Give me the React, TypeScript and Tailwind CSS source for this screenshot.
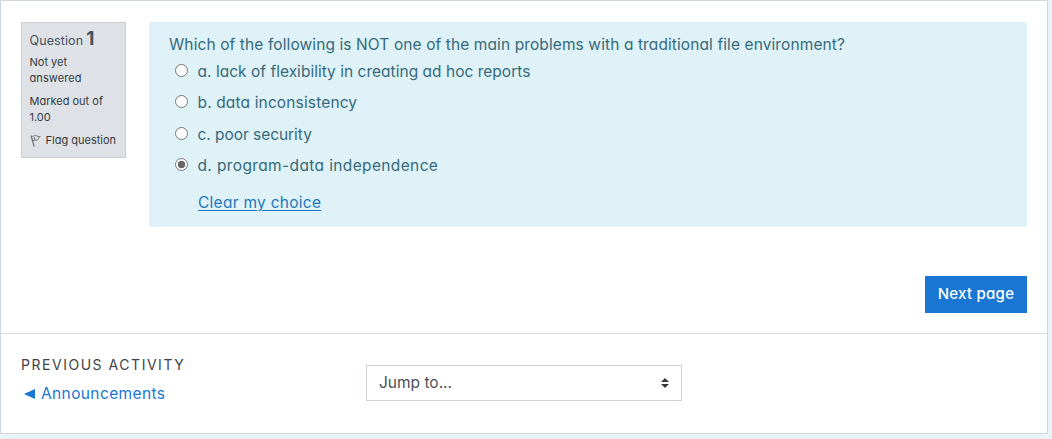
import { useState } from "react";

const choices = [
  { id: "a", label: "a. lack of flexibility in creating ad hoc reports", spacing: "tracking-[0.02px]" },
  { id: "b", label: "b. data inconsistency", spacing: "tracking-[0.14px]" },
  { id: "c", label: "c. poor security", spacing: "tracking-[-0.05px]" },
  { id: "d", label: "d. program-data independence", spacing: "tracking-[0.37px]" },
];

function FlagIcon() {
  return (
    <svg width="11" height="13" viewBox="0 0 11 13" fill="none" stroke="#73787d" strokeWidth="1">
      <path d="M1 1.5 4.2 12.5" strokeWidth="1.3" />
      <path d="M1.2 2.4C3 3.2 3.8 1 5.8 1.6S8.4 3 10.2 2.5C8.2 4 8.6 5.6 7.2 6S4.6 5.4 2.8 7" />
      <path d="M4 3.2 5 6.2" />
    </svg>
  );
}

function QuestionInfo() {
  return (
    <aside className="h-[136px] w-[105px] shrink-0 border border-[#cbced3] bg-[#dee2e6] pl-[7.5px] text-[11px] leading-4 text-[#343a40]">
      <h3 className="mt-[4px] flex h-6 items-baseline gap-[3px] text-[12.5px] leading-6 text-[#45525f]">
        <span className="tracking-[0.1px]">Question</span>
        <span className="text-[19px] leading-6 font-bold">1</span>
      </h3>
      <p className="mt-[3px] whitespace-nowrap">Not yet<br /><span className="tracking-[0.1px]">answered</span></p>
      <p className="mt-[7px] whitespace-nowrap">Marked out of<br />1.00</p>
      <div className="mt-[7px] flex items-center gap-[5px] whitespace-nowrap">
        <FlagIcon />
        <span>Flag question</span>
      </div>
    </aside>
  );
}

function Question() {
  const [selected, setSelected] = useState("d");
  return (
    <section className="h-[205px] w-[878px] rounded-[2px] bg-[#def2f8] pl-5 text-[15.5px] text-[#37697a]">
      <p className="pt-[11px] leading-6 tracking-[0.1px] whitespace-nowrap"><span>Which of the following is NOT one of the main problems with a traditional file environment?</span></p>
      <div className="mt-[3px] pl-[6px]">
        {choices.map((c) => (
          <label key={c.id} className="flex h-[31.3px] items-start whitespace-nowrap">
            <input type="radio" name="answer" checked={selected === c.id} onChange={() => setSelected(c.id)} className="mt-[4px] h-[13px] w-[13px] appearance-none rounded-full border border-[#767676] bg-white checked:bg-[radial-gradient(circle,#666_0_3.4px,#fff_4.1px)]" />
            <span className={"ml-[9.5px] leading-6 " + c.spacing}>{c.label}</span>
          </label>
        ))}
      </div>
      <a href="#" className="ml-[29px] mt-[6px] inline-block leading-6 tracking-[0.27px] text-[#1f76bd] underline underline-offset-2">Clear my choice</a>
    </section>
  );
}

export default function App() {
  return (
    <div className="h-[439px] w-[1052px] overflow-hidden bg-[#eaf3f7] font-[Inter,'Open_Sans',sans-serif] font-normal [font-feature-settings:'cv11'_1]">
      <main className="h-[434px] w-[1048px] border border-[#d0d8df] bg-white">
        <div className="flex h-[253px] items-start gap-[23px] pl-5 pt-[21px]">
          <QuestionInfo />
          <Question />
        </div>
        <div className="flex h-[80px] justify-end border-b border-[#d5dade] pr-5 pt-[22px]">
          <button className="h-[37px] w-[102px] bg-[#1976d2] text-[15px] font-medium tracking-[0.25px] whitespace-nowrap text-white">Next page</button>
        </div>
        <footer className="flex pl-5">
          <div className="w-[345px] pt-[19px]">
            <h4 className="text-[14px] leading-6 tracking-[1.53px] whitespace-nowrap text-[#404346]">PREVIOUS ACTIVITY</h4>
            <a href="#" className="mt-[5px] flex items-center pl-[3px] text-[15.5px] leading-6 tracking-[0.38px] text-[#1976d2]">
              <svg width="11" height="10" viewBox="0 0 11 10" className="mr-[6px]"><path d="M0 5 11 0V10Z" fill="currentColor" /></svg>
              <span>Announcements</span>
            </a>
          </div>
          <button className="mt-[31px] flex h-9 w-[316px] items-center justify-between border border-[#ced4da] bg-white pl-[12px] pr-[12px] text-[15.5px] text-[#495057]">
            <span>Jump to...</span>
            <svg width="8" height="10" viewBox="0 0 8 10" fill="#343a40"><path d="M4 0 8 4H0ZM0 6H8L4 10Z" /></svg>
          </button>
        </footer>
      </main>
    </div>
  );
}
